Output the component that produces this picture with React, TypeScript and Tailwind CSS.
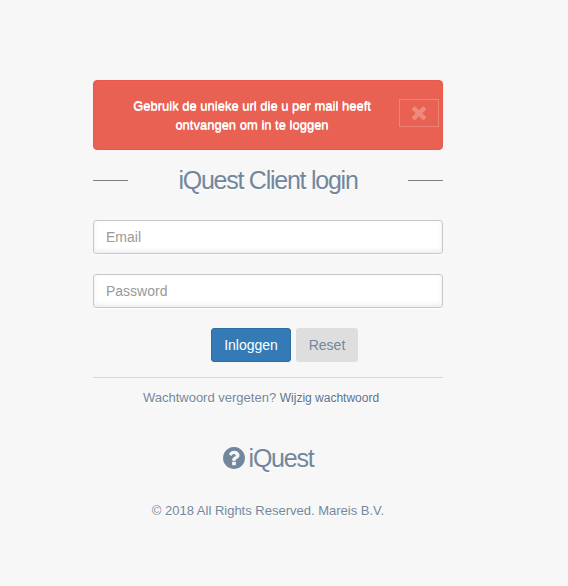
import React from "react";

function QuestionCircle() {
  return (
    <svg viewBox="128 128 1536 1536" className="h-[22px] w-[22px] fill-current" aria-hidden="true">
      <path d="M1024 1376v-192q0-14-9-23t-23-9h-192q-14 0-23 9t-9 23v192q0 14 9 23t23 9h192q14 0 23-9t9-23zm256-672q0-88-55.500-163t-138.500-116-170-41q-243 0-371 213-15 24 8 42l132 100q7 6 19 6 16 0 25-12 53-68 86-92 34-24 86-24 48 0 85.500 26t37.500 59q0 38-20 61t-68 45q-63 28-115.500 86.500t-52.500 125.500v36q0 14 9 23t23 9h192q14 0 23-9t9-23q0-19 21.500-49.500t54.500-49.500q32-18 49-28.500t46-35 44.500-48 28-60.500 12.500-81zm384 192q0 209-103 385.500t-279.500 279.500-385.500 103-385.500-103-279.500-279.500-103-385.500 103-385.500 279.500-279.500 385.500-103 385.500 103 279.500 279.500 103 385.500z" />
    </svg>
  );
}

function CloseMark() {
  return (
    <svg viewBox="302 238 1188 1316" preserveAspectRatio="none" className="mb-[2px] h-[15px] w-[14px] fill-[#ee897e]" aria-hidden="true">
      <path d="M1490 1322q0 40-28 68l-136 136q-28 28-68 28t-68-28l-294-294-294 294q-28 28-68 28t-68-28l-136-136q-28-28-28-68t28-68l294-294-294-294q-28-28-28-68t28-68l136-136q28-28 68-28t68 28l294 294 294-294q28-28 68-28t68 28l136 136q28 28 28 68t-28 68l-294 294 294 294q28 28 28 68z" />
    </svg>
  );
}

const field =
  "block h-[34px] w-full rounded-[3px] border border-[#c8c8c8] bg-white px-3 text-[14px] shadow-[0_1px_0_#fff,inset_0_-2px_5px_rgba(0,0,0,0.08)] outline-none placeholder:text-[#999] placeholder:opacity-100";

export default function App() {
  return (
    <div className="h-[586px] w-full overflow-hidden bg-[#f7f7f7] pl-[93px] pt-20 font-['Liberation_Sans',Arial,sans-serif] text-[13px] leading-[19px] text-[#73879c]">
      <main className="w-[350px] text-center [text-shadow:0_1px_0_#fff]">
        <div className="flex h-[70px] items-center rounded-[4px] border border-[#e8574a] bg-[#e96153] pl-[11px] pr-[3px] text-white">
          <p className="flex-1 px-6">
            Gebruik de unieke url die u per mail heeft
            <br />
            ontvangen om in te loggen
          </p>
          <button aria-label="Close" className="-mt-1 flex h-7 w-10 items-center justify-center border border-[#ef8277]">
            <CloseMark />
          </button>
        </div>

        <form>
          <div className="mt-5 flex h-5 items-center">
            <span className="h-px w-[35px] bg-[#7e7e7e]" />
            <h1 className="flex-1 text-[25px] leading-5 tracking-[-0.05em]">iQuest Client login</h1>
            <span className="h-px w-[35px] bg-[#7e7e7e]" />
          </div>
          <input className={field + " mt-[30px]"} type="text" placeholder="Email" />
          <input className={field + " mt-5"} type="password" placeholder="Password" />
          <div className="mt-5 flex gap-[5px] pl-[118px] text-[14px] leading-5">
            <button type="button" className="h-[34px] w-20 rounded-[3px] border border-[#2e6da4] bg-[#337ab7] text-white [text-shadow:none]">
              Inloggen
            </button>
            <button type="button" className="h-[34px] w-[62px] rounded-[3px] bg-[#dedede] [text-shadow:none]">
              Reset
            </button>
          </div>
        </form>

        <footer className="mt-[15px] border-t border-[#d8d8d8] pt-[10px]">
          <p className="-ml-[14px]">
            Wachtwoord vergeten? <a className="text-[12px] text-[#5a738e]">Wijzig wachtwoord</a>
          </p>
          <div className="mt-10 flex h-5 items-center justify-center gap-1">
            <QuestionCircle />
            <h2 className="text-[25px] leading-5 tracking-[-0.05em]">iQuest</h2>
          </div>
          <p className="mt-[33px]">© 2018 All Rights Reserved. Mareis B.V.</p>
        </footer>
      </main>
    </div>
  );
}
